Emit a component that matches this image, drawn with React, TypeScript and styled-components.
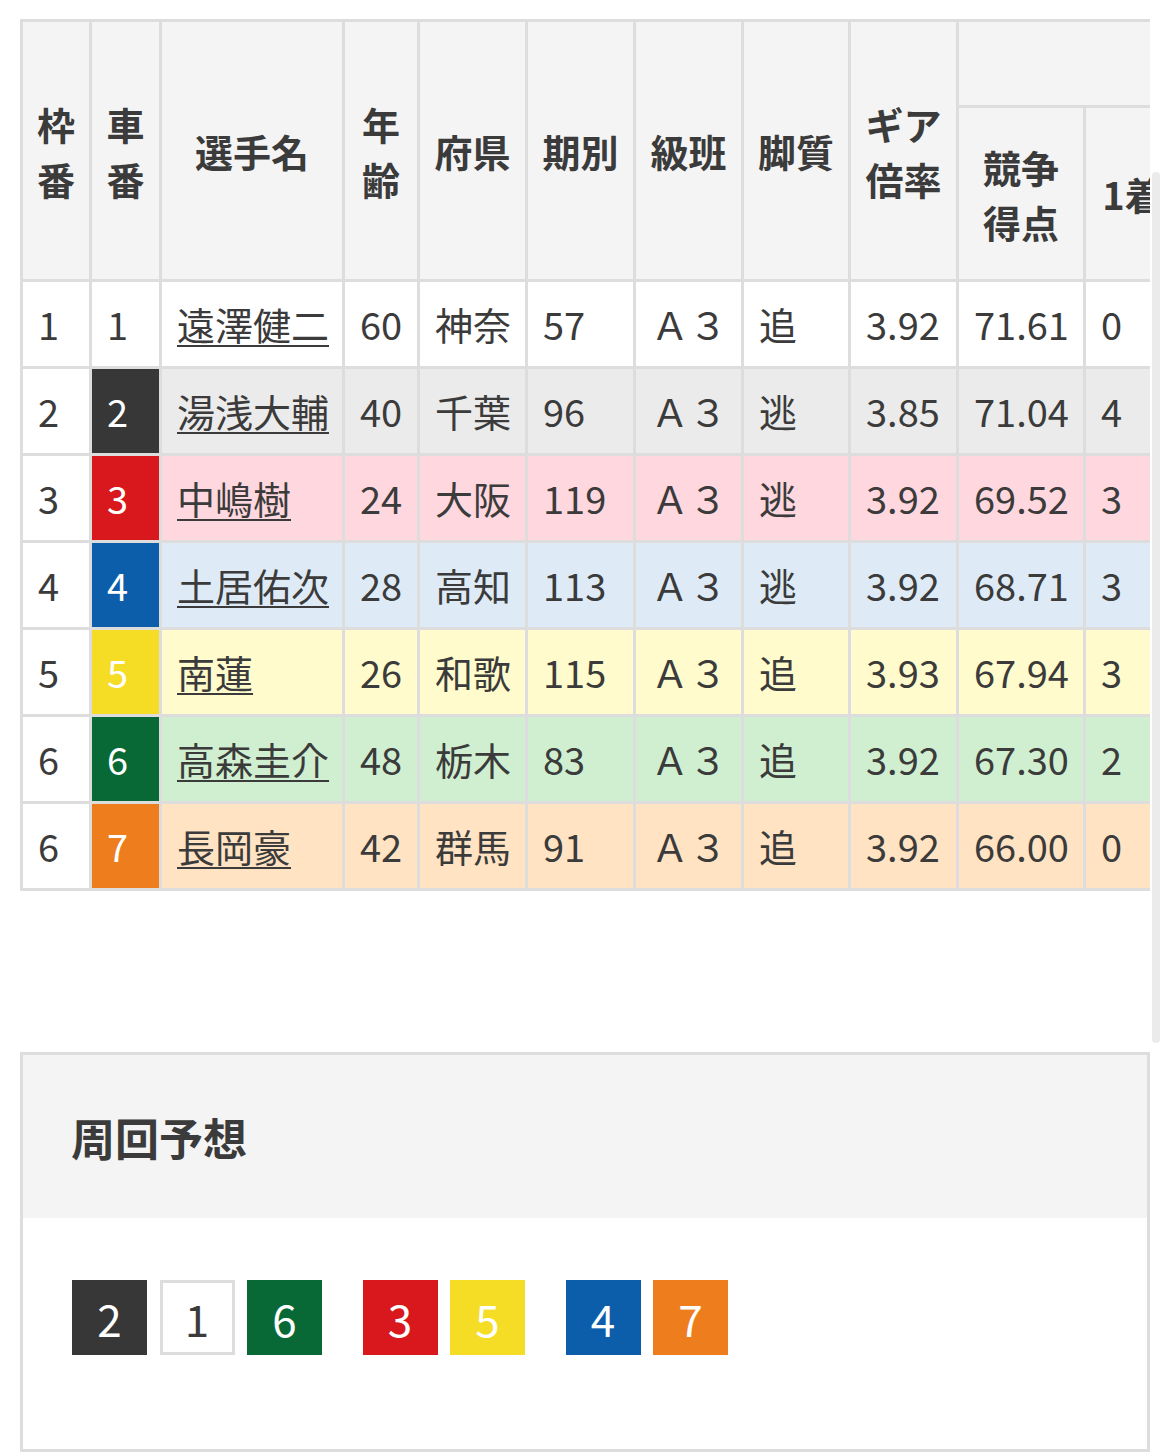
import React from 'react';
import styled, { createGlobalStyle } from 'styled-components';

const GlobalStyle = createGlobalStyle`
  html, body {
    margin: 0;
    padding: 0;
    background: #fff;
    overflow: hidden;
  }
  body {
    font-family: "Noto Sans CJK JP", "Noto Sans", sans-serif;
    color: #3b3b3b;
  }
`;

type Tone = { bg: string; fg: string; row: string };

const tones: Record<number, Tone> = {
  1: { bg: '#ffffff', fg: '#3b3b3b', row: '#ffffff' },
  2: { bg: '#373737', fg: '#ffffff', row: '#ebebeb' },
  3: { bg: '#d8181c', fg: '#ffffff', row: '#ffd7df' },
  4: { bg: '#0c5daa', fg: '#ffffff', row: '#deebf7' },
  5: { bg: '#f5dc25', fg: '#ffffff', row: '#fffbcc' },
  6: { bg: '#086937', fg: '#ffffff', row: '#d0efd0' },
  7: { bg: '#ee7d1d', fg: '#ffffff', row: '#ffe3c3' },
};

const racers = [
  { waku: 1, car: 1, name: '遠澤健二', age: 60, pref: '神奈', term: 57, cls: 'Ａ３', leg: '追', gear: '3.92', score: '71.61', first: 0 },
  { waku: 2, car: 2, name: '湯浅大輔', age: 40, pref: '千葉', term: 96, cls: 'Ａ３', leg: '逃', gear: '3.85', score: '71.04', first: 4 },
  { waku: 3, car: 3, name: '中嶋樹', age: 24, pref: '大阪', term: 119, cls: 'Ａ３', leg: '逃', gear: '3.92', score: '69.52', first: 3 },
  { waku: 4, car: 4, name: '土居佑次', age: 28, pref: '高知', term: 113, cls: 'Ａ３', leg: '逃', gear: '3.92', score: '68.71', first: 3 },
  { waku: 5, car: 5, name: '南蓮', age: 26, pref: '和歌', term: 115, cls: 'Ａ３', leg: '追', gear: '3.93', score: '67.94', first: 3 },
  { waku: 6, car: 6, name: '高森圭介', age: 48, pref: '栃木', term: 83, cls: 'Ａ３', leg: '追', gear: '3.92', score: '67.30', first: 2 },
  { waku: 6, car: 7, name: '長岡豪', age: 42, pref: '群馬', term: 91, cls: 'Ａ３', leg: '追', gear: '3.92', score: '66.00', first: 0 },
];

const colWidths = [66, 67, 180, 72, 105, 105, 105, 104, 105, 124, 93];

// 並び: 2-1-6 / 3-5 / 4-7
const lineup = [[2, 1, 6], [3, 5], [4, 7]];

const Page = styled.div`
  position: relative;
  width: 1170px;
  box-sizing: border-box;
  padding: 19px 20px 0 20px;
`;

const ScrollThumb = styled.div`
  position: absolute;
  top: 172px;
  left: 1152px;
  width: 8px;
  height: 871px;
  border-radius: 4px;
  background: #ebebeb;
`;

const TableScroll = styled.div`
  width: 1130px;
  overflow-x: auto;
  scrollbar-width: none;
  &::-webkit-scrollbar {
    display: none;
  }
`;

const Table = styled.table`
  table-layout: fixed;
  width: 1162px;
  border-collapse: separate;
  border-spacing: 3px;
  background: #dddddd;
`;

const HeadCell = styled.th<{ $h?: number }>`
  box-sizing: border-box;
  background: #f4f4f4;
  color: #3b3b3b;
  font-size: 38px;
  font-weight: 700;
  line-height: 55px;
  text-align: center;
  vertical-align: middle;
  padding: 0 12px;
  ${({ $h }) => ($h ? `height: ${$h}px;` : '')}
`;

const Cell = styled.td<{ $bg?: string; $fg?: string }>`
  box-sizing: border-box;
  height: 84px;
  padding: 0 15px;
  font-size: 38px;
  line-height: 1.2;
  white-space: nowrap;
  overflow: hidden;
  vertical-align: middle;
  background: ${({ $bg }) => $bg || '#ffffff'};
  color: ${({ $fg }) => $fg || '#3b3b3b'};
`;

const NameLink = styled.a`
  color: #3b3b3b;
  text-decoration: underline;
  text-decoration-thickness: 2px;
  text-underline-offset: 5px;
`;

const Card = styled.section`
  margin-top: 161px;
  border: 3px solid #dddddd;
  width: 1130px;
  box-sizing: border-box;
`;

const CardHead = styled.div`
  height: 163px;
  display: flex;
  align-items: center;
  padding-left: 48px;
  background: #f4f4f4;
`;

const CardTitle = styled.h2`
  margin: 0;
  font-size: 44px;
  font-weight: 700;
  color: #3b3b3b;
`;

const CardBody = styled.div`
  display: flex;
  gap: 40.5px;
  padding: 62px 49px 94px;
`;

const ChipGroup = styled.div`
  display: flex;
  gap: 12.5px;
`;

const Chip = styled.span<{ $bg: string; $fg: string; $outlined: boolean }>`
  box-sizing: border-box;
  width: 75px;
  height: 75px;
  display: flex;
  align-items: center;
  justify-content: center;
  font-size: 44px;
  line-height: 1;
  background: ${({ $bg }) => $bg};
  color: ${({ $fg }) => $fg};
  border: ${({ $outlined }) => ($outlined ? '3px solid #dddddd' : 'none')};
`;

export default function App() {
  return (
    <Page>
      <GlobalStyle />
      <TableScroll>
        <Table>
          <colgroup>
            {colWidths.map((w, i) => (
              <col key={i} style={{ width: w }} />
            ))}
          </colgroup>
          <thead>
            <tr>
              <HeadCell rowSpan={2}>枠番</HeadCell>
              <HeadCell rowSpan={2}>車番</HeadCell>
              <HeadCell rowSpan={2}>選手名</HeadCell>
              <HeadCell rowSpan={2}>年齢</HeadCell>
              <HeadCell rowSpan={2}>府県</HeadCell>
              <HeadCell rowSpan={2}>期別</HeadCell>
              <HeadCell rowSpan={2}>級班</HeadCell>
              <HeadCell rowSpan={2}>脚質</HeadCell>
              <HeadCell rowSpan={2}>ギア倍率</HeadCell>
              <HeadCell colSpan={2} $h={83}></HeadCell>
            </tr>
            <tr>
              <HeadCell $h={171}>競争得点</HeadCell>
              <HeadCell>1着</HeadCell>
            </tr>
          </thead>
          <tbody>
            {racers.map((r) => {
              const tone = tones[r.car];
              return (
                <tr key={r.car}>
                  <Cell>{r.waku}</Cell>
                  <Cell $bg={tone.bg} $fg={tone.fg}>{r.car}</Cell>
                  <Cell $bg={tone.row}>
                    <NameLink href="#">{r.name}</NameLink>
                  </Cell>
                  <Cell $bg={tone.row}>{r.age}</Cell>
                  <Cell $bg={tone.row}>{r.pref}</Cell>
                  <Cell $bg={tone.row}>{r.term}</Cell>
                  <Cell $bg={tone.row}>{r.cls}</Cell>
                  <Cell $bg={tone.row}>{r.leg}</Cell>
                  <Cell $bg={tone.row}>{r.gear}</Cell>
                  <Cell $bg={tone.row}>{r.score}</Cell>
                  <Cell $bg={tone.row}>{r.first}</Cell>
                </tr>
              );
            })}
          </tbody>
        </Table>
      </TableScroll>

      <Card>
        <CardHead>
          <CardTitle>周回予想</CardTitle>
        </CardHead>
        <CardBody>
          {lineup.map((group, gi) => (
            <ChipGroup key={gi}>
              {group.map((car) => (
                <Chip key={car} $bg={tones[car].bg} $fg={tones[car].fg} $outlined={car === 1}>
                  {car}
                </Chip>
              ))}
            </ChipGroup>
          ))}
        </CardBody>
      </Card>
      <ScrollThumb />
    </Page>
  );
}
